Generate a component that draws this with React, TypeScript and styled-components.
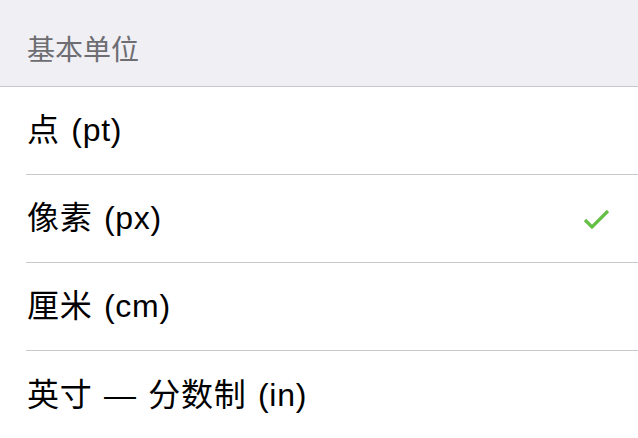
import React from "react";
import styled, { createGlobalStyle } from "styled-components";

const Global = createGlobalStyle`
  html, body { margin: 0; padding: 0; background: #ffffff; }
  body { font-family: "Liberation Sans", "Noto Sans CJK SC", sans-serif; -webkit-font-smoothing: antialiased; }
`;

const Page = styled.div`
  width: 638px;
  height: 438px;
  overflow: hidden;
  background: #ffffff;
`;

const SectionHeader = styled.div`
  height: 87px;
  box-sizing: border-box;
  background: #efeff4;
  border-bottom: 1px solid #c8c7cc;
  display: flex;
  align-items: flex-end;
  padding: 0 0 17px 27px;
  font-size: 28px;
  line-height: 36px;
  color: #6d6d72;
`;

const List = styled.div`
  display: flex;
  flex-direction: column;
`;

const Row = styled.div<{ $last?: boolean }>`
  height: 88px;
  box-sizing: border-box;
  margin-left: 26px;
  padding: 0 28px 0 1px;
  display: flex;
  align-items: center;
  justify-content: space-between;
  border-bottom: ${(p) => (p.$last ? "none" : "1px solid #c8c7cc")};
`;

const Label = styled.span`
  font-size: 32px;
  line-height: 40px;
  color: #000000;
  margin-top: -1px;
  letter-spacing: 0.7px;
  word-spacing: 2px;
`;

const Check = styled.svg`
  width: 28px;
  height: 22px;
  display: block;
`;

const units = [
  { label: "点 (pt)", selected: false },
  { label: "像素 (px)", selected: true },
  { label: "厘米 (cm)", selected: false },
  { label: "英寸 — 分数制 (in)", selected: false },
];

export default function App() {
  return (
    <Page>
      <Global />
      <SectionHeader>基本单位</SectionHeader>
      <List>
        {units.map((u, i) => (
          <Row key={u.label} $last={i === units.length - 1}>
            <Label>{u.label}</Label>
            {u.selected && (
              <Check viewBox="0 0 28 22">
                <path d="M3 12 L10 19 L26 3" fill="none" stroke="#66bf45" strokeWidth="3.2" />
              </Check>
            )}
          </Row>
        ))}
      </List>
    </Page>
  );
}
